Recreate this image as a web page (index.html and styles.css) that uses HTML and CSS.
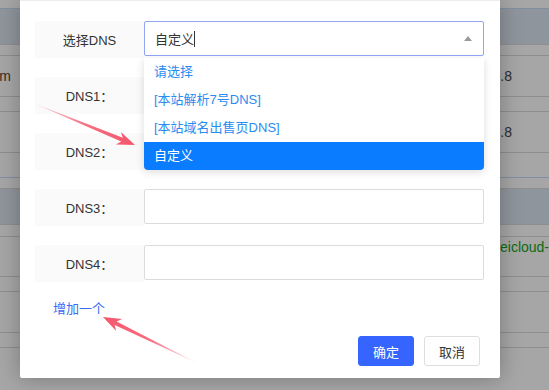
FILE: index.html
```html
<!DOCTYPE html>
<html lang="zh-CN">
<head>
<meta charset="utf-8">
<title>DNS</title>
<link rel="stylesheet" href="styles.css">
</head>
<body>
<div class="page">
  <div class="bgrow h9 line-blue"></div>
  <div class="bgrow h36 band"></div>
  <div class="bgrow h11"></div>
  <div class="bgrow h41"><div class="cell-l"><span>ns1.domain.com</span></div><div class="cell-m"></div><div class="cell-r"><span class="ip">8.8.8.8</span></div></div>
  <div class="bgrow h15"></div>
  <div class="bgrow h41"><div class="cell-l"></div><div class="cell-m"></div><div class="cell-r"><span class="ip">8.8.4.8</span></div></div>
  <div class="bgrow h25 line-blue"></div>
  <div class="bgrow h11"></div>
  <div class="bgrow h36 band"></div>
  <div class="bgrow h12"></div>
  <div class="bgrow h40 top"><div class="cell-l"></div><div class="cell-m"></div><div class="cell-r green">eicloud-dns.com</div></div>
  <div class="bgrow h15"></div>
  <div class="bgrow h41"></div>
  <div class="bgrow h15"></div>
  <div class="bgrow rest"></div>
</div>

<div class="modal">
  <div class="modal-body">
    <div class="form-row">
      <div class="lab">选择DNS</div>
      <div class="field select">
        <span class="sel-text">自定义</span><span class="caret-line"></span>
        <span class="tri"></span>
        <ul class="dropdown">
          <li class="opt">请选择</li>
          <li class="opt">[本站解析7号DNS]</li>
          <li class="opt">[本站域名出售页DNS]</li>
          <li class="opt active">自定义</li>
        </ul>
      </div>
    </div>
    <div class="form-row">
      <div class="lab">DNS1：</div>
      <div class="field"></div>
    </div>
    <div class="form-row">
      <div class="lab">DNS2：</div>
      <div class="field"></div>
    </div>
    <div class="form-row">
      <div class="lab">DNS3：</div>
      <div class="field"></div>
    </div>
    <div class="form-row">
      <div class="lab">DNS4：</div>
      <div class="field"></div>
    </div>
    <div class="add-link">增加一个</div>
    <div class="btns">
      <button class="btn primary">确定</button>
      <button class="btn">取消</button>
    </div>
  </div>
</div>

<svg class="arrows" width="549" height="390" viewBox="0 0 549 390">
  <defs>
    <linearGradient id="g1" gradientUnits="userSpaceOnUse" x1="33" y1="103" x2="135" y2="145">
      <stop offset="0" stop-color="#f5566c" stop-opacity="0.15"/>
      <stop offset="0.5" stop-color="#f5566c" stop-opacity="0.85"/>
      <stop offset="1" stop-color="#f5566c"/>
    </linearGradient>
    <linearGradient id="g2" gradientUnits="userSpaceOnUse" x1="197" y1="363" x2="103" y2="317">
      <stop offset="0" stop-color="#f5566c" stop-opacity="0.15"/>
      <stop offset="0.5" stop-color="#f5566c" stop-opacity="0.85"/>
      <stop offset="1" stop-color="#f5566c"/>
    </linearGradient>
  </defs>
  <polygon fill="url(#g1)" points="33,103 122.8,137.8 120.9,131.9 135,145 115.9,144.4 121.2,141.6"/>
  <polygon fill="url(#g2)" points="197,363 114.6,325 116.2,331 103,317 122.2,319 116.6,321.4"/>
</svg>
</body>
</html>
```

FILE: styles.css
```css
html, body {
  margin: 0;
  padding: 0;
}
body {
  width: 549px;
  height: 390px;
  overflow: hidden;
  background: #a6a6a6;
  font-family: "Liberation Sans", "Noto Sans CJK SC", sans-serif;
  position: relative;
}

/* dimmed page behind the dialog */
.page {
  display: flex;
  flex-direction: column;
}
.bgrow {
  box-sizing: border-box;
  border-bottom: 1px solid #8e8e8e;
  display: grid;
  grid-template-columns: 11px 489px 49px;
  align-items: center;
  font-size: 14px;
  color: #2c2c2c;
}
.bgrow.top { align-items: start; padding-top: 1px; }
.line-blue { border-bottom-color: #7f8fa2; }
.band { background: #8f959c; }
.h9 { height: 9px; }
.h11 { height: 11px; }
.h12 { height: 12px; }
.h15 { height: 15px; }
.h25 { height: 25px; }
.h36 { height: 36px; }
.h40 { height: 40px; }
.h41 { height: 41px; }
.rest { height: 42px; border-bottom: none; }
.cell-l {
  display: flex;
  justify-content: flex-end;
  overflow: hidden;
  white-space: nowrap;
  color: #3a2c22;
  line-height: 18px;
}
.cell-r {
  display: flex;
  white-space: nowrap;
  overflow: visible;
  line-height: 18px;
}
.ip {
  width: 12px;
  display: flex;
  justify-content: flex-end;
  white-space: nowrap;
}
.cell-r.green { color: #0d6b12; overflow: hidden; }

/* dialog */
.modal {
  position: absolute;
  left: 20px;
  top: 0;
  width: 480px;
  height: 378px;
  box-sizing: border-box;
  background: #fff;
  border-top: 1px solid #ececec;
  border-radius: 0 0 2px 2px;
  box-shadow: 0 0 22px rgba(0, 0, 0, 0.28);
  z-index: 3;
}
.modal-body {
  padding: 20px 15px 0 15px;
}
.form-row {
  display: flex;
  align-items: flex-start;
  margin-bottom: 19px;
}
.lab {
  width: 109px;
  height: 37px;
  background: #fafafa;
  display: flex;
  align-items: center;
  justify-content: center;
  font-size: 13px;
  color: #333;
}
.field {
  width: 340px;
  height: 35px;
  box-sizing: border-box;
  border: 1px solid #dcdcdc;
  border-radius: 2px;
  background: #fff;
}
.select {
  position: relative;
  height: 35px;
  border-color: #93a6f6;
  display: flex;
  align-items: center;
  padding-left: 10px;
  font-size: 13px;
  color: #333;
}
.caret-line {
  display: inline-block;
  width: 1px;
  height: 16px;
  background: #333;
}
.tri {
  position: absolute;
  right: 11px;
  top: 14px;
  width: 0;
  height: 0;
  border-left: 4px solid transparent;
  border-right: 4px solid transparent;
  border-bottom: 5px solid #9a9a9a;
}
.dropdown {
  position: absolute;
  left: -1px;
  top: 36px;
  width: 340px;
  margin: 0;
  padding: 0;
  list-style: none;
  background: #fff;
  border-radius: 0 0 4px 4px;
  overflow: hidden;
  box-shadow: 0 2px 8px rgba(0, 0, 0, 0.14);
  z-index: 2;
}
.opt {
  height: 28px;
  line-height: 28px;
  padding-left: 10px;
  font-size: 13px;
  color: #2a8cf0;
}
.opt.active {
  background: #0a7cff;
  color: #fff;
}
.add-link {
  padding-left: 18px;
  line-height: 16px;
  font-size: 13px;
  color: #3a6cf4;
}
.btns {
  display: flex;
  justify-content: flex-end;
  gap: 10px;
  padding-right: 5px;
  margin-top: 19px;
}
.btn {
  width: 56px;
  height: 30px;
  box-sizing: border-box;
  border: 1px solid #dedede;
  border-radius: 3px;
  background: #fff;
  color: #333;
  font-family: "Liberation Sans", "Noto Sans CJK SC", sans-serif;
  font-size: 13px;
  padding: 0;
}
.btn.primary {
  background: #3565fe;
  border-color: #3565fe;
  color: #fff;
}

.arrows {
  position: absolute;
  left: 0;
  top: 0;
  pointer-events: none;
  z-index: 5;
}
```
